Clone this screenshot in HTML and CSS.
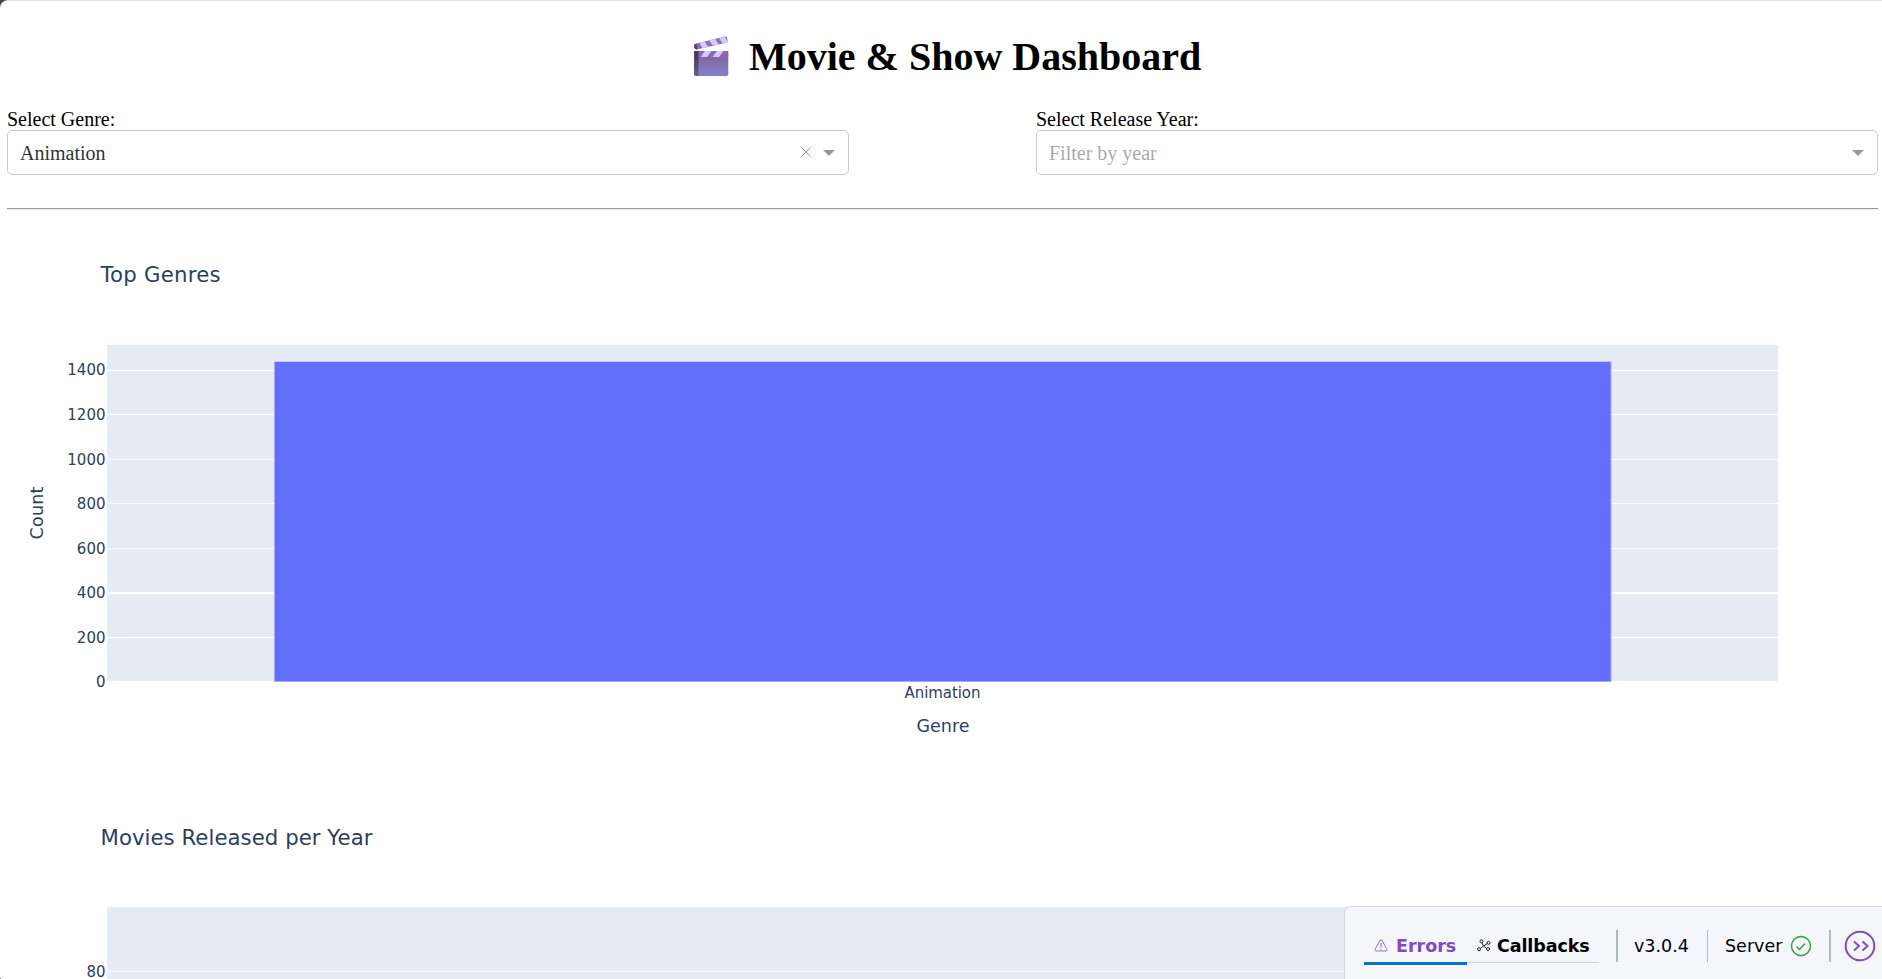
FILE: index.html
```html
<!DOCTYPE html>
<html lang="en">
<head>
<meta charset="utf-8">
<title>Movie &amp; Show Dashboard</title>
<link rel="stylesheet" href="styles.css">
</head>
<body>
<div class="page">
  <h1 class="title">
    <svg class="clapper" width="39" height="42" viewBox="0 0 36 42" preserveAspectRatio="none">
      <defs>
        <linearGradient id="board" x1="0" y1="0" x2="0" y2="1"><stop offset="0" stop-color="#80628f"/><stop offset="1" stop-color="#8380cf"/></linearGradient>
        <linearGradient id="edge" x1="0" y1="0" x2="0" y2="1"><stop offset="0" stop-color="#423550"/><stop offset="1" stop-color="#62589a"/></linearGradient>
        <clipPath id="arm"><path d="M2 9.5Q2 8 4 7.500L30 .5Q32 0 32.500 1.500L33 5L32.500 6.500L4 13.500L2 12z"/></clipPath>
        <clipPath id="strip"><path d="M2 15h31.500v6H2z"/></clipPath>
      </defs>
      <g clip-path="url(#arm)"><path fill="#8e6bbb" d="M0 0h36v16H0z"/><path fill="#d1ccff" d="M6.500 6l4.500-2 4.500 8-5 2zM15.500 3.500l5-2 5 8-5 2zM24.500 1l4.500-2 5 8-5 2z"/><path fill="#4d3d61" d="M1 8l3-1 1 7H1z"/></g>
      <rect x="2" y="15" width="31.500" height="25" rx="2" fill="url(#board)"/>
      <g clip-path="url(#strip)"><path fill="#9164b9" d="M5 15h29v6H5z"/><path fill="#d1ccff" d="M12 15h6l-4 6H8zM23 15h6l-4 6h-6z"/></g>
      <path fill="url(#edge)" d="M2 15h4v25H4Q2 40 2 38z"/>
    </svg>
    <span>Movie &amp; Show Dashboard</span>
  </h1>
  <div class="filters">
    <div class="filter">
      <label>Select Genre:</label>
      <div class="select"><span class="value">Animation</span><svg class="clear" width="10" height="10" viewBox="0 0 10 10"><path d="M.5.5l9 9M9.500.5l-9 9"/></svg><i class="arrow"></i></div>
    </div>
    <div class="filter">
      <label>Select Release Year:</label>
      <div class="select"><span class="value placeholder">Filter by year</span><i class="arrow"></i></div>
    </div>
  </div>
  <hr class="rule">
  <svg class="chart" width="1882" height="561" viewBox="0 211 1882 561">
    <text class="heading" x="100.500" y="282" textLength="120">Top Genres</text>
    <path class="plot" d="M107 345h1671v336H107z"/>
    <path class="grid" d="M107 370h1671v1H107zM107 414h1671v1H107zM107 459h1671v1H107zM107 503h1671v1H107zM107 548h1671v1H107zM107 592h1671v2H107zM107 637h1671v1H107z"/>
    <path class="bar-edge" d="M274 361.500h1337.500v320.500H274z"/>
    <path class="bar" d="M275 362h1335.500v319H275z"/>
    <g class="ticks">
      <text x="105.500" y="375">1400</text><text x="105.500" y="420">1200</text><text x="105.500" y="465">1000</text><text x="105.500" y="509">800</text><text x="105.500" y="554">600</text><text x="105.500" y="598">400</text><text x="105.500" y="643">200</text><text x="105.500" y="687">0</text>
    </g>
    <text class="tick-x" x="904.500" y="698" textLength="76">Animation</text>
    <text class="axis" x="916.500" y="732" textLength="53">Genre</text>
    <text class="axis" transform="translate(42.500 539.500) rotate(-90)" textLength="53">Count</text>
  </svg>
  <svg class="chart" width="1882" height="207" viewBox="0 772 1882 207">
    <text class="heading" x="100.500" y="845" textLength="272">Movies Released per Year</text>
    <path class="plot" d="M107 907h1671v72H107z"/>
    <path class="grid" d="M107 971h1671v1H107z"/>
    <g class="ticks"><text x="105.500" y="977">80</text></g>
  </svg>
</div>
<div class="devtools">
  <div class="tabs">
    <div class="tab active">
      <svg width="14" height="13" viewBox="0 0 14 13"><path d="M6 1.300Q7 .2 8 1.300L13 10.500Q13.200 12 12 12H2Q.8 12 1 10.500z"/><path d="M7 4v4.500M7 9.500v1.200"/></svg>
      <span class="tab-errors">Errors</span>
    </div>
    <div class="tab">
      <svg width="14" height="13" viewBox="0 0 14 13"><g><circle cx="4.500" cy="2.300" r="1.500"/><circle cx="2" cy="10.200" r="1.500"/><circle cx="11.500" cy="3.800" r="1.500"/><circle cx="11" cy="10" r="1.500"/><path d="M5 4l1.500 3L3.300 9.500M6.500 7l4-2.500M6.500 7l3 2.300"/></g></svg>
      <span class="tab-callbacks">Callbacks</span>
    </div>
  </div>
  <i class="divider thick"></i>
  <span class="version">v3.0.4</span>
  <i class="divider"></i>
  <span class="server">Server</span>
  <svg class="ok" width="22" height="22" viewBox="0 0 22 22"><circle cx="11" cy="11" r="9.500"/><path d="M6.500 11.500l3 3 5.500-6"/></svg>
  <i class="divider thick last"></i>
  <svg class="collapse" width="32" height="32" viewBox="0 0 32 32"><circle cx="16" cy="16" r="14.300"/><path d="M10 11.500l5 4.500-5 4.500M18.500 11.500l5 4.500-5 4.500"/></svg>
</div>
</body>
</html>
```
FILE: styles.css
```css
* { box-sizing: border-box; }
html { background: #444; }
body { margin: 0; height: 979px; overflow: hidden; font-family: "Liberation Serif", "Times New Roman", serif; }
.page { height: 979px; overflow: hidden; background: #fff; border-top: 1px solid #e0e0e0; border-radius: 8px 0 0 2px; }
.title { display: flex; gap: 18px; height: 106px; margin: 0; padding: 33px 0 0 692px; font-size: 40px; line-height: 46px; white-space: nowrap; }
.clapper { margin-top: 2px; flex: none; }
.filters { display: flex; justify-content: space-between; height: 101px; margin: 0 4px 0 7px; }
.filter { width: 842px; font-size: 20px; }
.filter label { display: block; height: 23px; line-height: 25px; }
.select { display: flex; align-items: center; height: 45px; padding: 0 13px 0 12px; border: 1px solid #ccc; border-radius: 5px; }
.value { flex: 1; padding-top: 1px; color: #333; }
.placeholder { color: #aaa; }
.clear { margin: -2px 12px 0 0; stroke: #999; fill: none; }
.arrow { border: 6px solid transparent; border-top-color: #999; border-bottom: 0; }
.rule { height: 2px; margin: 0 4px 0 7px; border: 0; border-top: 1px solid #999; border-bottom: 1px solid #eee; }
.chart { display: block; margin-top: 1px; font-family: "DejaVu Sans", Verdana, sans-serif; fill: #2a3f5f; }
.chart + .chart { margin-top: 0; }
.heading { font-size: 21.25px; }
.ticks { font-size: 15px; text-anchor: end; }
.tick-x { font-size: 15px; }
.axis { font-size: 17.5px; }
.plot { fill: #e5ecf6; }
.grid { fill: #fff; }
.bar-edge { fill: #a3aafa; }
.bar { fill: #636efa; }
.devtools { position: fixed; right: 0; bottom: 0; display: flex; width: 538px; height: 73px; padding: 23px 0 0 19px; background: #f4f6fa; border: 1px solid #d5d8ea; border-width: 1px 0 0 1px; border-radius: 6px 0 0; font: 17.5px/32px "DejaVu Sans", Verdana, sans-serif; white-space: nowrap; }
.tabs { display: flex; flex: none; width: 235px; height: 34px; font-weight: bold; }
.tab { display: flex; width: 132px; padding-left: 9px; border-bottom: 1px solid #d0d4e3; height: 33px; }
.tab svg { flex: none; margin: 9px 6px 0 1px; fill: none; stroke: #222; stroke-width: 1; }
.tab.active { width: 103px; padding-left: 9px; height: 35px; border-bottom: 3px solid #0074cc; color: #7f4bc4; }
.tab.active svg { margin-right: 8px; stroke: #7f4bc4; stroke-width: .8; }
.tab-callbacks { letter-spacing: -.1px; }
.divider { flex: none; width: 1px; height: 32px; background: #adb6d0; }
.thick { width: 2px; margin-left: 17px; }
.version { width: 73px; margin-left: 16px; }
.server { width: 58px; margin-left: 17px; }
.ok { margin: 5px 0 0 7px; fill: none; stroke: #36a03e; stroke-width: 1.5; }
.last { margin-left: 17px; }
.collapse { flex: none; margin-left: 13px; fill: none; stroke: #7f4bc4; stroke-width: 2; }
```
